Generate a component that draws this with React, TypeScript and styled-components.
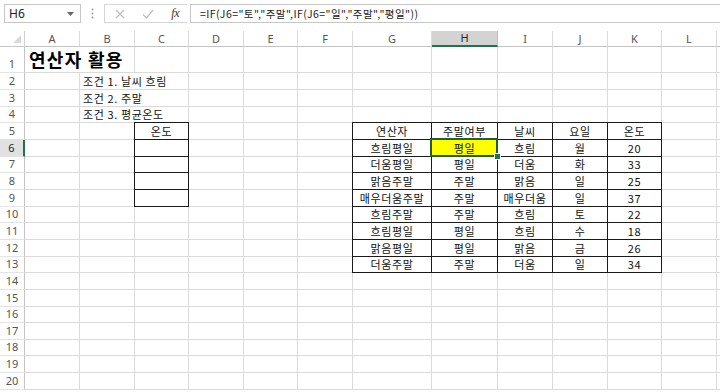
import React from 'react';
import styled, { createGlobalStyle, css } from 'styled-components';

const GlobalStyle = createGlobalStyle`
  html, body {
    margin: 0;
    padding: 0;
    background: #ffffff;
    overflow: hidden;
  }
`;

const COLS = ['A', 'B', 'C', 'D', 'E', 'F', 'G', 'H', 'I', 'J', 'K', 'L', 'M'];
const COL_WIDTHS = [55, 55, 54, 55, 54, 55, 79, 66, 55, 55, 54, 55, 20];
const ROW_COUNT = 20;
const SEL_COL = 'H';
const SEL_ROW = 6;

const cellFont = `"Noto Sans CJK KR", "Noto Sans", sans-serif`;
const uiFont = `"Noto Sans", "Open Sans", sans-serif`;

const Page = styled.div`
  width: 720px;
  height: 392px;
  overflow: hidden;
  background: #ffffff;
`;

const FormulaBar = styled.div`
  height: 31px;
  box-sizing: border-box;
  padding: 4px 0 0 4px;
  display: flex;
  align-items: flex-start;
`;

const NameBox = styled.div`
  width: 77px;
  height: 19px;
  box-sizing: border-box;
  border: 1px solid #c6c6c6;
  display: flex;
  align-items: center;
  justify-content: space-between;
  padding: 0 6px 0 4px;
  font-family: ${uiFont};
  font-size: 12px;
  color: #222;
`;

const Grip = styled.div`
  width: 23px;
  height: 19px;
  display: flex;
  align-items: center;
  justify-content: center;
`;

const FuncGroup = styled.div`
  width: 83px;
  height: 19px;
  box-sizing: border-box;
  border: 1px solid #d6d6d6;
  border-right: none;
  display: flex;
  align-items: center;
  justify-content: space-between;
  padding: 0 8px 0 10px;
`;

const FxLabel = styled.span`
  font-family: "Liberation Serif", serif;
  font-style: italic;
  font-size: 12px;
  color: #333;
  letter-spacing: -0.5px;
`;

const FormulaInput = styled.div`
  flex: 1;
  height: 19px;
  margin-left: 3px;
  box-sizing: border-box;
  border: 1px solid #c6c6c6;
  border-right: none;
  display: flex;
  align-items: center;
  padding-left: 9px;
  font-family: ${cellFont};
  font-size: 10.5px;
  letter-spacing: 0.45px;
  color: #222;
  white-space: nowrap;
`;

const Sheet = styled.div`
  display: grid;
  grid-template-columns: 25px ${COL_WIDTHS.map((w) => `${w}px`).join(' ')};
  grid-template-rows: 16px 26.33px repeat(${ROW_COUNT - 1}, 16.67px);
`;

const Corner = styled.div`
  position: relative;
  box-sizing: border-box;
  border-right: 1px solid #d0d0d0;
  border-bottom: 1px solid #c4c4c4;
  background: #ffffff;

  svg {
    position: absolute;
    right: 3px;
    bottom: 3px;
  }
`;

const ColHeader = styled.div<{ $selected?: boolean }>`
  box-sizing: border-box;
  display: flex;
  align-items: center;
  justify-content: center;
  font-family: ${uiFont};
  font-size: 11px;
  line-height: 14px;
  color: #555;
  background: #ffffff;
  border-right: 1px solid #dadada;
  border-bottom: 1px solid #c4c4c4;

  ${(p) =>
    p.$selected &&
    css`
      background: #d3d3d3;
      color: #262626;
      border-bottom: 2px solid #217346;
      border-right-color: #bdbdbd;
    `}
`;

const RowHeader = styled.div<{ $selected?: boolean }>`
  box-sizing: border-box;
  display: flex;
  align-items: flex-end;
  justify-content: center;
  padding-bottom: 1px;
  font-family: ${uiFont};
  font-size: 11px;
  line-height: 14px;
  color: #555;
  background: #ffffff;
  border-right: 1px solid #c4c4c4;
  border-bottom: 1px solid #e4e4e4;

  ${(p) =>
    p.$selected &&
    css`
      background: #e1e1e1;
      color: #262626;
      border-right: 2px solid #217346;
    `}
`;

type Edge = { left?: boolean; top?: boolean };

const Cell = styled.div<{
  $span: number;
  $boxed?: boolean;
  $edge?: Edge;
  $center?: boolean;
  $title?: boolean;
  $fill?: string;
}>`
  position: relative;
  grid-column: span ${(p) => p.$span};
  box-sizing: border-box;
  display: flex;
  align-items: center;
  justify-content: ${(p) => (p.$center ? 'center' : 'flex-start')};
  padding: 0 ${(p) => (p.$center ? '0' : '3px')};
  white-space: nowrap;
  font-family: ${cellFont};
  font-size: 11px;
  letter-spacing: 0.6px;
  line-height: 14px;
  color: #111;
  background: ${(p) => p.$fill || '#ffffff'};
  border-right: 1px solid #dadada;
  border-bottom: 1px solid #dadada;

  ${(p) =>
    p.$boxed &&
    css`
      border-right-color: #1a1a1a;
      border-bottom-color: #1a1a1a;
    `}

  ${(p) => {
    const shadows: string[] = [];
    if (p.$edge?.left) shadows.push('-1px 0 0 #1a1a1a');
    if (p.$edge?.top) shadows.push('0 -1px 0 #1a1a1a');
    if (p.$edge?.left && p.$edge?.top) shadows.push('-1px -1px 0 #1a1a1a');
    return shadows.length ? `box-shadow: ${shadows.join(', ')};` : '';
  }}

  ${(p) =>
    p.$title &&
    css`
      align-items: flex-end;
      padding-left: 4px;
      padding-bottom: 3px;
      font-size: 18px;
      font-weight: 700;
      letter-spacing: 1.3px;
      line-height: 20px;
      color: #000;
    `}
`;

const Selection = styled.div`
  position: absolute;
  left: -2px;
  top: -2px;
  right: -1px;
  bottom: -1px;
  border: 2px solid #1d5f3a;
  pointer-events: none;
`;

const FillHandle = styled.div`
  position: absolute;
  right: -4px;
  bottom: -4px;
  width: 5px;
  height: 5px;
  background: #217346;
  border: 1px solid #ffffff;
  z-index: 2;
`;

type Spec = { text: string; span?: number; title?: boolean; center?: boolean };

const content: Record<string, Spec> = {
  A1: { text: '연산자 활용', span: 2, title: true },
  B2: { text: '조건 1. 날씨 흐림', span: 2 },
  B3: { text: '조건 2. 주말', span: 2 },
  B4: { text: '조건 3. 평균온도', span: 2 },
  C5: { text: '온도', center: true },
};

const tableRows = [
  ['연산자', '주말여부', '날씨', '요일', '온도'],
  ['흐림평일', '평일', '흐림', '월', '20'],
  ['더움평일', '평일', '더움', '화', '33'],
  ['맑음주말', '주말', '맑음', '일', '25'],
  ['매우더움주말', '주말', '매우더움', '일', '37'],
  ['흐림주말', '주말', '흐림', '토', '22'],
  ['흐림평일', '평일', '흐림', '수', '18'],
  ['맑음평일', '평일', '맑음', '금', '26'],
  ['더움주말', '주말', '더움', '일', '34'],
];

tableRows.forEach((row, ri) => {
  row.forEach((text, ci) => {
    content[`${COLS[6 + ci]}${5 + ri}`] = { text, center: true };
  });
});

const boxes = [
  { c1: 2, c2: 2, r1: 5, r2: 9 },
  { c1: 6, c2: 10, r1: 5, r2: 13 },
];

const boxOf = (c: number, r: number) =>
  boxes.find((b) => c >= b.c1 && c <= b.c2 && r >= b.r1 && r <= b.r2);

const ChevronDown = () => (
  <svg width="7" height="4" viewBox="0 0 7 4">
    <path d="M0 0 L7 0 L3.5 4 Z" fill="#666" />
  </svg>
);

const GripDots = () => (
  <svg width="3" height="11" viewBox="0 0 3 11">
    <circle cx="1.5" cy="1.5" r="1" fill="#9a9a9a" />
    <circle cx="1.5" cy="5.5" r="1" fill="#9a9a9a" />
    <circle cx="1.5" cy="9.5" r="1" fill="#9a9a9a" />
  </svg>
);

const CancelIcon = () => (
  <svg width="10" height="10" viewBox="0 0 10 10">
    <path d="M1 1 L9 9 M9 1 L1 9" stroke="#bdbdbd" strokeWidth="1.2" />
  </svg>
);

const EnterIcon = () => (
  <svg width="12" height="10" viewBox="0 0 12 10">
    <path d="M1 5.5 L4.5 9 L11 1" stroke="#bdbdbd" strokeWidth="1.2" fill="none" />
  </svg>
);

const CornerMark = () => (
  <svg width="8" height="8" viewBox="0 0 8 8">
    <path d="M8 0 L8 8 L0 8 Z" fill="#d9d9d9" />
  </svg>
);

const App: React.FC = () => {
  const cells: React.ReactNode[] = [];

  cells.push(
    <Corner key="corner">
      <CornerMark />
    </Corner>
  );
  COLS.forEach((col) => {
    // the last column is only a sliver at the right edge, so its letter stays hidden
    cells.push(
      <ColHeader key={`h-${col}`} $selected={col === SEL_COL}>
        {col === 'M' ? '' : col}
      </ColHeader>
    );
  });

  for (let r = 1; r <= ROW_COUNT; r++) {
    cells.push(
      <RowHeader key={`r-${r}`} $selected={r === SEL_ROW}>
        {r}
      </RowHeader>
    );
    let c = 0;
    while (c < COLS.length) {
      const id = `${COLS[c]}${r}`;
      const spec = content[id];
      const span = spec?.span ?? 1;
      const box = boxOf(c, r);
      const selected = COLS[c] === SEL_COL && r === SEL_ROW;
      cells.push(
        <Cell
          key={id}
          $span={span}
          $boxed={!!box}
          $edge={box ? { left: c === box.c1, top: r === box.r1 } : undefined}
          $center={spec?.center}
          $title={spec?.title}
          $fill={selected ? '#ffff00' : undefined}
        >
          {spec?.text}
          {selected && (
            <>
              <Selection />
              <FillHandle />
            </>
          )}
        </Cell>
      );
      c += span;
    }
  }

  return (
    <Page>
      <GlobalStyle />
      <FormulaBar>
        <NameBox>
          <span>H6</span>
          <ChevronDown />
        </NameBox>
        <Grip>
          <GripDots />
        </Grip>
        <FuncGroup>
          <CancelIcon />
          <EnterIcon />
          <FxLabel>fx</FxLabel>
        </FuncGroup>
        <FormulaInput>=IF(J6="토","주말",IF(J6="일","주말","평일"))</FormulaInput>
      </FormulaBar>
      <Sheet>{cells}</Sheet>
    </Page>
  );
};

export default App;
